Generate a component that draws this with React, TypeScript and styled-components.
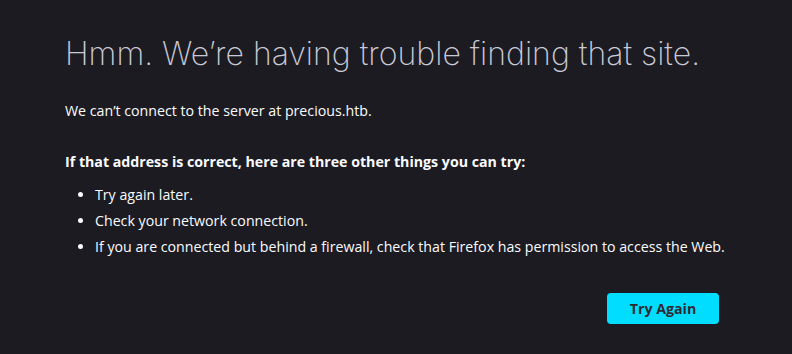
import React from "react";
import styled, { createGlobalStyle } from "styled-components";

const Global = createGlobalStyle`
  html, body { margin: 0; padding: 0; background: #1c1b22; }
  body { width: 792px; height: 354px; overflow: hidden; }
`;

const Page = styled.main`
  box-sizing: border-box;
  width: 792px;
  height: 354px;
  padding: 34px 0 0 65px;
  background: #1c1b22;
  color: #fbfbfe;
  font-family: "Open Sans", "Noto Sans", sans-serif;
  font-size: 14.2px;
`;

const Content = styled.div`
  width: 654px;
  display: flex;
  flex-direction: column;
`;

const Title = styled.h1`
  margin: 0;
  font-family: "Inter", "Open Sans", sans-serif;
  font-weight: 200;
  font-size: 32px;
  line-height: 40px;
  color: #c9cad6;
  white-space: nowrap;
`;

const Para = styled.p<{ $bold?: boolean }>`
  margin: ${(p) => (p.$bold ? "27px 0 0" : "25px 0 0")};
  font-weight: ${(p) => (p.$bold ? 700 : 400)};
  line-height: 24px;
  white-space: nowrap;
`;

const List = styled.ul`
  margin: 9px 0 0;
  padding: 0 0 0 30px;
  display: flex;
  flex-direction: column;
  gap: 2px;
`;

const Item = styled.li`
  line-height: 24px;
  white-space: nowrap;
`;

const Actions = styled.div`
  display: flex;
  justify-content: flex-end;
  margin-top: 34px;
`;

const Button = styled.button`
  width: 112px;
  height: 31px;
  border: none;
  border-radius: 4px;
  background: #00ddff;
  color: #2b2a33;
  font-family: inherit;
  font-size: 14.2px;
  font-weight: 700;
  cursor: pointer;
`;

export default function App() {
  return (
    <>
      <Global />
      <Page>
        <Content>
          <Title>Hmm. We’re having trouble finding that site.</Title>
          <Para>We can’t connect to the server at precious.htb.</Para>
          <Para $bold>If that address is correct, here are three other things you can try:</Para>
          <List>
            <Item>Try again later.</Item>
            <Item>Check your network connection.</Item>
            <Item>If you are connected but behind a firewall, check that Firefox has permission to access the Web.</Item>
          </List>
          <Actions>
            <Button>Try Again</Button>
          </Actions>
        </Content>
      </Page>
    </>
  );
}
